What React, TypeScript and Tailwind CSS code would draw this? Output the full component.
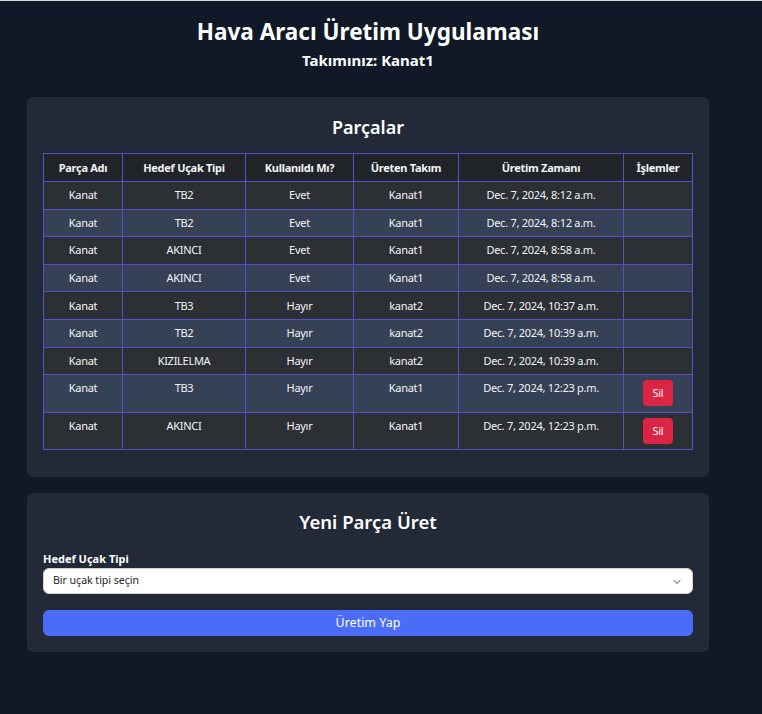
import { ChevronDown } from "lucide-react";

type Part = {
  name: string;
  aircraft: string;
  used: boolean;
  team: string;
  createdAt: string;
  canDelete?: boolean;
};

const parts: Part[] = [
  { name: "Kanat", aircraft: "TB2", used: true, team: "Kanat1", createdAt: "Dec. 7, 2024, 8:12 a.m." },
  { name: "Kanat", aircraft: "TB2", used: true, team: "Kanat1", createdAt: "Dec. 7, 2024, 8:12 a.m." },
  { name: "Kanat", aircraft: "AKINCI", used: true, team: "Kanat1", createdAt: "Dec. 7, 2024, 8:58 a.m." },
  { name: "Kanat", aircraft: "AKINCI", used: true, team: "Kanat1", createdAt: "Dec. 7, 2024, 8:58 a.m." },
  { name: "Kanat", aircraft: "TB3", used: false, team: "kanat2", createdAt: "Dec. 7, 2024, 10:37 a.m." },
  { name: "Kanat", aircraft: "TB2", used: false, team: "kanat2", createdAt: "Dec. 7, 2024, 10:39 a.m." },
  { name: "Kanat", aircraft: "KIZILELMA", used: false, team: "kanat2", createdAt: "Dec. 7, 2024, 10:39 a.m." },
  { name: "Kanat", aircraft: "TB3", used: false, team: "Kanat1", createdAt: "Dec. 7, 2024, 12:23 p.m.", canDelete: true },
  { name: "Kanat", aircraft: "AKINCI", used: false, team: "Kanat1", createdAt: "Dec. 7, 2024, 12:23 p.m.", canDelete: true },
];

const headers = ["Parça Adı", "Hedef Uçak Tipi", "Kullanıldı Mı?", "Üreten Takım", "Üretim Zamanı", "İşlemler"];
const widths = ["w-[79px]", "w-[123px]", "w-[108px]", "w-[105px]", "w-[165px]", "w-[69px]"];

const PartsTable = () => {
  return (
    <table className="w-full table-fixed border-collapse border border-[#5650c8] text-[11px] leading-4 tracking-tight text-gray-100">
      <thead>
        <tr className="bg-[#212529]">
          {headers.map((h, i) => (
            <th key={h} className={`${widths[i]} border border-[#5650c8] py-[5.5px] text-center font-bold`}>
              {h}
            </th>
          ))}
        </tr>
      </thead>
      <tbody>
        {parts.map((p, index) => (
          <tr key={index} className={index % 2 === 0 ? "bg-[#2c2f33]" : "bg-[#374155]"}>
            <td className="border border-[#5650c8] py-[5.3px] text-center align-top">{p.name}</td>
            <td className="border border-[#5650c8] py-[5.3px] text-center align-top">{p.aircraft}</td>
            <td className="border border-[#5650c8] py-[5.3px] text-center align-top">{p.used ? "Evet" : "Hayır"}</td>
            <td className="border border-[#5650c8] py-[5.3px] text-center align-top">{p.team}</td>
            <td className="border border-[#5650c8] py-[5.3px] text-center align-top">{p.createdAt}</td>
            <td className="border border-[#5650c8] py-[5.3px] text-center align-top">
              {p.canDelete && (
                <button className="h-[26px] rounded bg-[#dc2545] px-2.5 text-[11px] text-white">Sil</button>
              )}
            </td>
          </tr>
        ))}
      </tbody>
    </table>
  );
};

const App = () => {
  return (
    <div className="min-h-[714px] bg-[#111827] font-['Noto_Sans',sans-serif] text-white">
      <div className="h-px bg-gray-300" />
      <div className="w-[736px] px-[27px] pt-[17px]">
        <h1 className="text-center text-[22.5px] font-bold leading-7">Hava Aracı Üretim Uygulaması</h1>
        <h2 className="mt-[3px] text-center text-[15px] font-bold leading-[22px]">Takımınız: Kanat1</h2>

        <div className="mt-[26px] rounded-md bg-[#222937] px-4 pt-4 pb-[27px]">
          <h3 className="mb-3 text-center text-[18px] font-semibold leading-7">Parçalar</h3>
          <PartsTable />
        </div>

        <div className="mt-4 rounded-md bg-[#222937] px-4 pt-[15px] pb-4">
          <h3 className="mb-[15px] text-center text-[18.5px] font-semibold leading-7">Yeni Parça Üret</h3>
          <label className="block text-[11px] font-bold leading-4">Hedef Uçak Tipi</label>
          <div className="relative mt-px">
            <div className="flex h-[26px] items-center rounded-md border border-gray-300 bg-white pl-[9px] text-[10.5px] text-[#212529]">
              Bir uçak tipi seçin
            </div>
            <ChevronDown className="absolute right-[10px] top-[8px] h-3 w-3 text-gray-700" strokeWidth={2} />
          </div>
          <button className="mt-4 h-[26px] w-full rounded-md bg-[#4a6cf7] text-[12.5px] text-white">Üretim Yap</button>
        </div>
      </div>
    </div>
  );
};

export default App;
